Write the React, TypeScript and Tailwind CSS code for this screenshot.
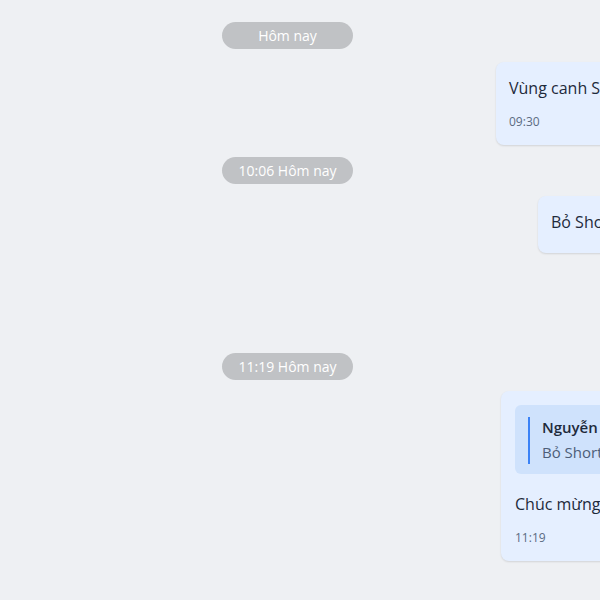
const font = { fontFamily: '"Open Sans", "Noto Sans", sans-serif' };

function DatePill({ label, className }: { label: string; className?: string }) {
  return (
    <div className={`flex w-[575px] justify-center ${className ?? ""}`}>
      <span className="flex h-[27px] w-[131px] items-center justify-center rounded-full bg-[#c0c2c5] text-[14px] text-white">
        {label}
      </span>
    </div>
  );
}

export default function App() {
  return (
    <div className="h-[600px] w-[600px] overflow-hidden bg-[#eef0f3]" style={font}>
      <div className="flex flex-col pt-[22px]">
        <DatePill label="Hôm nay" />

        <div className="mt-[13px] pl-[496px]">
          <div className="w-[320px] rounded-lg bg-[#e5efff] pb-[15px] pl-[13px] pt-[14px] shadow-[0_1px_2px_rgba(0,0,0,0.12)]">
            <p className="whitespace-nowrap text-[16px] leading-6 text-[#1e2a3b]">Vùng canh Shorts hôm nay</p>
            <p className="mt-[14px] text-[12px] leading-4 text-[#5b6b82]">09:30</p>
          </div>
        </div>

        <DatePill label="10:06 Hôm nay" className="mt-[12px]" />

        <div className="mt-[12px] pl-[538px]">
          <div className="w-[300px] rounded-lg bg-[#e5efff] pb-[19px] pl-[13px] pt-[14px] shadow-[0_1px_2px_rgba(0,0,0,0.12)]">
            <p className="whitespace-nowrap text-[16px] leading-6 text-[#1e2a3b]">Bỏ Shorts rồi nhé</p>
          </div>
        </div>

        <DatePill label="11:19 Hôm nay" className="mt-[100px]" />

        <div className="mt-[11px] pl-[501px]">
          <div className="w-[320px] rounded-lg bg-[#e5efff] pb-[15px] pl-[14px] pt-[14px] shadow-[0_1px_2px_rgba(0,0,0,0.12)]">
            <div className="flex h-[69px] rounded-md bg-[#cfe2fc] pl-[13px] pt-[12px]">
              <span className="h-[47px] w-[2px] bg-[#3b82f6]" />
              <div className="pl-[12px]">
                <p className="whitespace-nowrap text-[15px] font-semibold leading-5 text-[#1e2a3b]">Nguyễn Văn An</p>
                <p className="mt-[5px] whitespace-nowrap text-[15px] leading-5 text-[#4d5e78]">Bỏ Shorts rồi nhé</p>
              </div>
            </div>
            <p className="mt-[18px] whitespace-nowrap text-[16px] leading-6 text-[#1e2a3b]">Chúc mừng nhé</p>
            <p className="mt-[14px] text-[12px] leading-4 text-[#5b6b82]">11:19</p>
          </div>
        </div>
      </div>
    </div>
  );
}
